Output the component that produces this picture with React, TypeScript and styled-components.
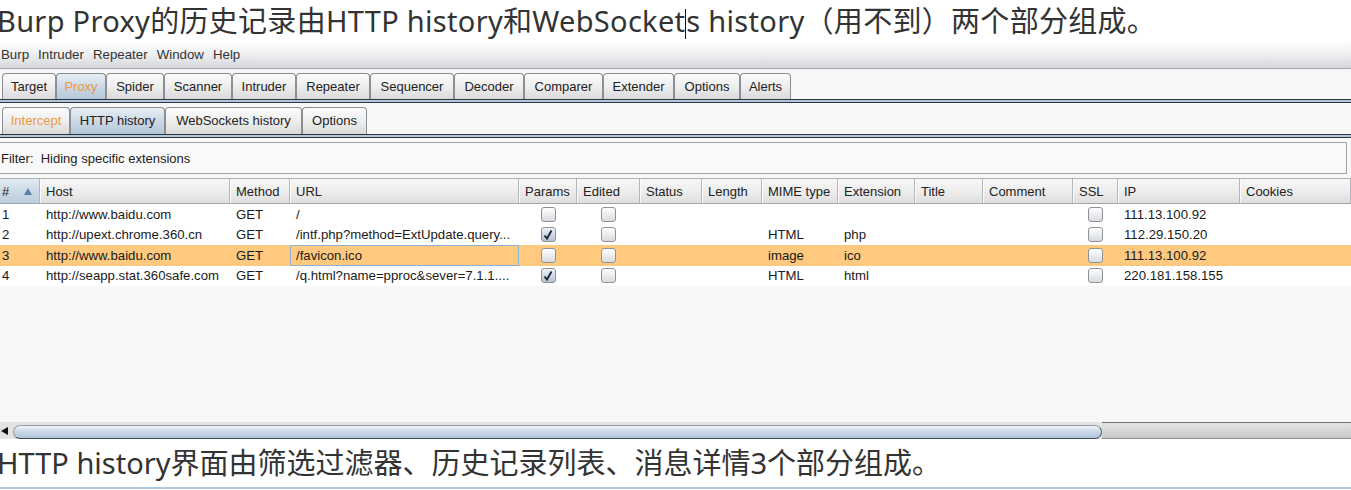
import React from 'react';
import styled, { createGlobalStyle } from 'styled-components';

const UI_FONT = `"Liberation Sans", Arial, sans-serif`;
const DOC_FONT = `"Noto Sans", "Noto Sans CJK SC", sans-serif`;

const GlobalStyle = createGlobalStyle`
  html, body {
    margin: 0;
    padding: 0;
    background: #fff;
  }
  body {
    overflow: hidden;
  }
`;

const COLUMNS = '44px 190px 60px 229px 58px 63px 62px 60px 76px 77px 68px 90px 45px 122px 111px';

const Page = styled.div`
  width: 1351px;
  height: 490px;
  display: flex;
  flex-direction: column;
  overflow: hidden;
  background: #fff;
`;

const Caption = styled.p<{ $height: number; $spacing?: number }>`
  margin: 0 0 0 -3px;
  height: ${p => p.$height}px;
  line-height: ${p => p.$height}px;
  font-family: ${DOC_FONT};
  font-size: 29px;
  letter-spacing: ${p => p.$spacing ?? 0}px;
  color: #333;
  white-space: nowrap;
`;

const Caret = styled.span`
  display: inline-block;
  width: 0;
  height: 30px;
  border-left: 1px solid #111;
  vertical-align: -7px;
`;

const Window = styled.div`
  display: flex;
  flex-direction: column;
  font-family: ${UI_FONT};
  font-size: 13px;
  color: #1e1e1e;
  background: #f7f7f7;
`;

const MenuBar = styled.div`
  height: 27px;
  display: flex;
  align-items: center;
  gap: 9px;
  padding: 0 0 1px 1px;
  box-sizing: border-box;
  background: linear-gradient(#fdfdfd, #eff0f2 45%, #d5d7da);
  border-bottom: 1px solid #a3a6aa;
  font-size: 13.3px;
  color: #333;
`;

const TabStrip = styled.div<{ $height: number }>`
  height: ${p => p.$height}px;
  display: flex;
  align-items: flex-end;
  padding-left: 2px;
  box-sizing: border-box;
`;

const Tab = styled.div<{ $width: number; $height: number; $selected?: boolean; $accent?: boolean }>`
  box-sizing: border-box;
  width: ${p => p.$width}px;
  height: ${p => p.$height}px;
  display: flex;
  align-items: center;
  justify-content: center;
  padding-bottom: 1px;
  border: 1px solid #8b8e92;
  border-bottom: none;
  border-radius: 4px 4px 0 0;
  background: ${p =>
    p.$selected
      ? 'linear-gradient(#e8eef4, #c9d7e5 55%, #b4c7da)'
      : 'linear-gradient(#fcfcfc, #ececec 55%, #dadada)'};
  color: ${p => (p.$accent ? '#eb9a3f' : '#222')};
  white-space: nowrap;
`;

const PaneRule = styled.div`
  box-sizing: border-box;
  height: 4px;
  border-top: 1px solid #2c3744;
  border-bottom: 1px solid #2c3744;
  background: #b2c6da;
`;

const Content = styled.div`
  display: flex;
  flex-direction: column;
  padding-top: 4px;
  background: #f8f8f8;
`;

const FilterBar = styled.div`
  box-sizing: border-box;
  height: 32px;
  margin: 0 4px 0 -1px;
  padding-left: 1px;
  display: flex;
  align-items: center;
  border: 1px solid #a0a3a7;
  background: #f9f9f9;
  white-space: pre;
  color: #222;
`;

const TableView = styled.div`
  margin-top: 4px;
  margin-left: -4px;
  width: 1355px;
  height: 244px;
  display: flex;
  flex-direction: column;
  background: #f8f8f8;
`;

const HeaderRow = styled.div`
  box-sizing: border-box;
  height: 26px;
  display: grid;
  grid-template-columns: ${COLUMNS};
  border-top: 1px solid #aeb0b3;
  border-bottom: 1px solid #a3a5a8;
  background: linear-gradient(#f7f7f7, #ececec 55%, #dedede);
`;

const HeaderCell = styled.div<{ $sorted?: boolean }>`
  display: flex;
  align-items: center;
  justify-content: space-between;
  padding: 0 7px 0 6px;
  border-right: 1px solid #b4b6b9;
  box-shadow: inset 1px 0 #fbfbfb;
  background: ${p => (p.$sorted ? 'linear-gradient(#e2eaf2, #cbd8e5 55%, #bccddd)' : 'transparent')};
  color: #222;
  white-space: nowrap;
  overflow: hidden;
`;

const Row = styled.div<{ $selected?: boolean }>`
  height: 20.5px;
  display: grid;
  grid-template-columns: ${COLUMNS};
  background: ${p => (p.$selected ? '#ffc97f' : '#fff')};
`;

const Cell = styled.div<{ $focused?: boolean; $center?: boolean }>`
  box-sizing: border-box;
  display: flex;
  align-items: center;
  justify-content: ${p => (p.$center ? 'center' : 'flex-start')};
  padding-left: ${p => (p.$center ? 0 : p.$focused ? 5 : 6)}px;
  border: ${p => (p.$focused ? '1px solid #8fb2d3' : 'none')};
  white-space: nowrap;
  overflow: hidden;
  font-size: 13.2px;
  color: #1a1a1a;
`;

const Box = styled.span<{ $checked?: boolean }>`
  box-sizing: border-box;
  width: 15px;
  height: 15px;
  display: flex;
  align-items: center;
  justify-content: center;
  border: 1px solid #8e9297;
  border-radius: 3px;
  background: ${p =>
    p.$checked ? 'linear-gradient(#eef2f6, #b6c3d1)' : 'linear-gradient(#fefefe, #d9dbde)'};
`;

const ScrollBar = styled.div`
  height: 17px;
  display: flex;
  align-items: flex-end;
  background: #e3e3e3;
`;

const ScrollArrow = styled.div`
  width: 12px;
  height: 17px;
  display: flex;
  align-items: center;
  justify-content: flex-start;
  padding-left: 1px;
  box-sizing: border-box;
`;

const ScrollThumb = styled.div`
  box-sizing: border-box;
  width: 1089px;
  height: 14px;
  margin-left: 1px;
  border: 1px solid #8e9eae;
  border-bottom-color: #3e4e5f;
  border-right-color: #4e5e6f;
  border-radius: 10px;
  background: linear-gradient(#f1f5f9, #cfdbe7 40%, #b0c4d8);
`;

const ScrollTrack = styled.div`
  flex: 1;
  height: 17px;
  box-sizing: border-box;
  border-top: 1px solid #6f7377;
  border-bottom: 1px solid #8a8d90;
  background: linear-gradient(#e4e4e4, #c9c9c9);
`;

const BottomRule = styled.div`
  height: 2px;
  background: #a9cbe3;
`;

const Checkbox = ({ checked }: { checked?: boolean }) => (
  <Box $checked={checked}>
    {checked && (
      <svg width="12" height="12" viewBox="0 0 12 12">
        <path d="M2.5 6.5 L5 9.5 L9.5 1.5" fill="none" stroke="#1c2a3a" strokeWidth="1.9" />
      </svg>
    )}
  </Box>
);

const mainTabs: [string, number][] = [
  ['Target', 54], ['Proxy', 50], ['Spider', 58], ['Scanner', 68], ['Intruder', 64], ['Repeater', 74],
  ['Sequencer', 84], ['Decoder', 70], ['Comparer', 79], ['Extender', 71], ['Options', 66], ['Alerts', 51],
];

const subTabs: [string, number][] = [
  ['Intercept', 68], ['HTTP history', 95], ['WebSockets history', 137], ['Options', 65],
];

const headers = ['#', 'Host', 'Method', 'URL', 'Params', 'Edited', 'Status', 'Length', 'MIME type',
  'Extension', 'Title', 'Comment', 'SSL', 'IP', 'Cookies'];

type Entry = {
  id: string; host: string; url: string; params: boolean; mime: string; ext: string; ip: string;
};

const entries: Entry[] = [
  { id: '1', host: 'http://www.baidu.com', url: '/', params: false, mime: '', ext: '', ip: '111.13.100.92' },
  { id: '2', host: 'http://upext.chrome.360.cn', url: '/intf.php?method=ExtUpdate.query...', params: true, mime: 'HTML', ext: 'php', ip: '112.29.150.20' },
  { id: '3', host: 'http://www.baidu.com', url: '/favicon.ico', params: false, mime: 'image', ext: 'ico', ip: '111.13.100.92' },
  { id: '4', host: 'http://seapp.stat.360safe.com', url: '/q.html?name=pproc&sever=7.1.1....', params: true, mime: 'HTML', ext: 'html', ip: '220.181.158.155' },
];

export default function App() {
  return (
    <Page>
      <GlobalStyle />
      <Caption $height={42} $spacing={0.3}>
        Burp Proxy的历史记录由HTTP history和WebSocket<Caret />s history（用不到）两个部分组成。
      </Caption>
      <Window>
        <MenuBar>
          {['Burp', 'Intruder', 'Repeater', 'Window', 'Help'].map(m => <span key={m}>{m}</span>)}
        </MenuBar>
        <TabStrip $height={30}>
          {mainTabs.map(([name, w]) => (
            <Tab key={name} $width={w} $height={26} $selected={name === 'Proxy'} $accent={name === 'Proxy'}>
              {name}
            </Tab>
          ))}
        </TabStrip>
        <PaneRule />
        <TabStrip $height={31}>
          {subTabs.map(([name, w]) => (
            <Tab key={name} $width={w} $height={27} $selected={name === 'HTTP history'} $accent={name === 'Intercept'}>
              {name}
            </Tab>
          ))}
        </TabStrip>
        <PaneRule />
        <Content>
          <FilterBar>Filter:  Hiding specific extensions</FilterBar>
          <TableView>
            <HeaderRow>
              {headers.map(h => (
                <HeaderCell key={h} $sorted={h === '#'}>
                  {h}
                  {h === '#' && (
                    <svg width="8" height="7" viewBox="0 0 8 7">
                      <polygon points="4,0 8,7 0,7" fill="#5a80aa" />
                    </svg>
                  )}
                </HeaderCell>
              ))}
            </HeaderRow>
            {entries.map(e => {
              const selected = e.id === '3';
              return (
                <Row key={e.id} $selected={selected}>
                  <Cell>{e.id}</Cell>
                  <Cell>{e.host}</Cell>
                  <Cell>GET</Cell>
                  <Cell $focused={selected}>{e.url}</Cell>
                  <Cell $center><Checkbox checked={e.params} /></Cell>
                  <Cell $center><Checkbox /></Cell>
                  <Cell />
                  <Cell />
                  <Cell>{e.mime}</Cell>
                  <Cell>{e.ext}</Cell>
                  <Cell />
                  <Cell />
                  <Cell $center><Checkbox /></Cell>
                  <Cell>{e.ip}</Cell>
                  <Cell />
                </Row>
              );
            })}
          </TableView>
          <ScrollBar>
            <ScrollArrow>
              <svg width="7" height="8" viewBox="0 0 7 8">
                <polygon points="0,4 7,0 7,8" fill="#111" />
              </svg>
            </ScrollArrow>
            <ScrollThumb />
            <ScrollTrack />
          </ScrollBar>
        </Content>
      </Window>
      <Caption $height={48}>HTTP history界面由筛选过滤器、历史记录列表、消息详情3个部分组成。</Caption>
      <BottomRule />
    </Page>
  );
}
